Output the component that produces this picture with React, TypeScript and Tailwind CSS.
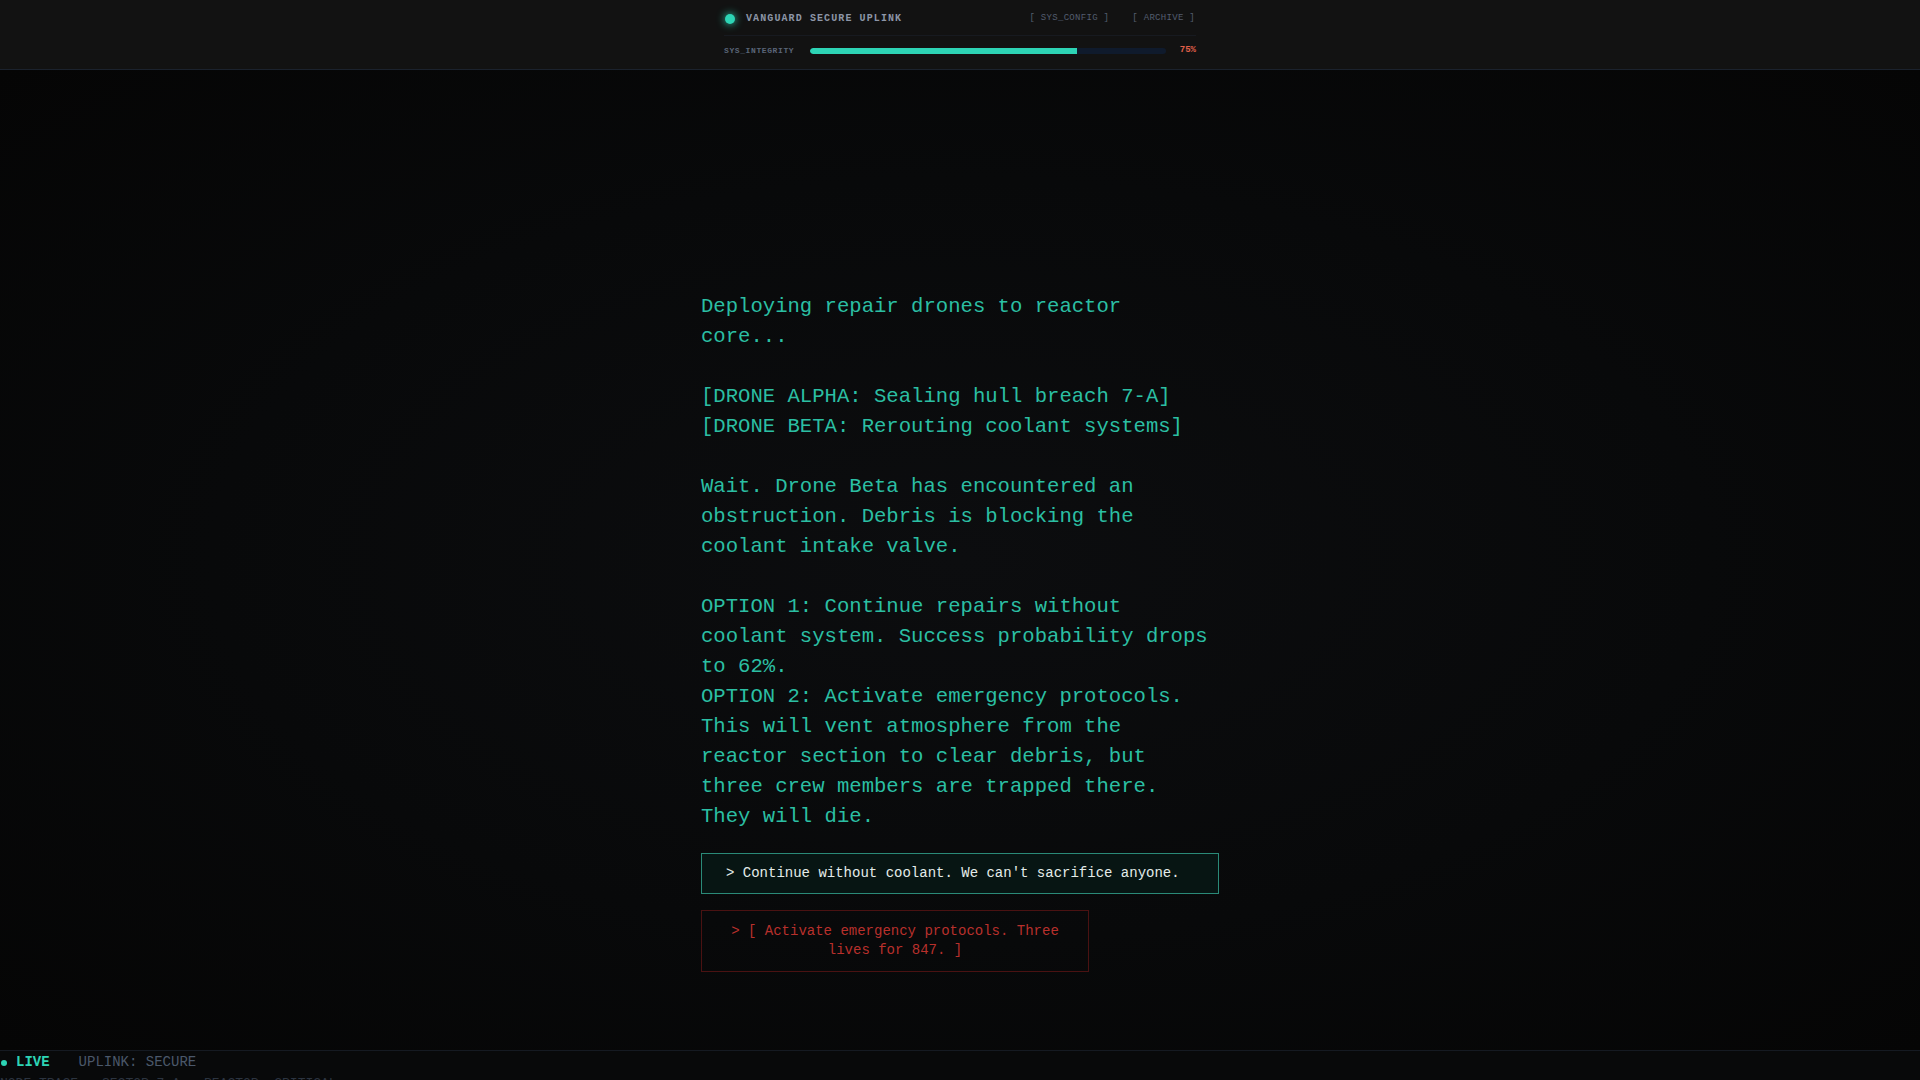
import React from "react";

const mono = "font-['Liberation_Mono','DejaVu_Sans_Mono',monospace]";

const story = `Deploying repair drones to reactor core...

[DRONE ALPHA: Sealing hull breach 7-A]
[DRONE BETA: Rerouting coolant systems]

Wait. Drone Beta has encountered an obstruction. Debris is blocking the coolant intake valve.

OPTION 1: Continue repairs without coolant system. Success probability drops to 62%.
OPTION 2: Activate emergency protocols. This will vent atmosphere from the reactor section to clear debris, but three crew members are trapped there. They will die.`;

export default function App() {
  const integrity = 75;

  return (
    <div className={`h-screen w-full flex flex-col overflow-hidden bg-[#08090a] ${mono}`}>
      {/* top bar */}
      <header className="h-[70px] shrink-0 bg-[#121212] border-b border-[#1b222d]">
        <div className="w-[472px] mx-auto flex flex-col">
          <div className="h-9 pt-[2px] flex items-center justify-between border-b border-[#171a20]">
            <div className="flex items-center gap-[11px] pl-[1px]">
              <span className="w-[10px] h-[10px] rounded-full bg-[#2dd4b5] shadow-[0_0_8px_#2dd4b5]" />
              <span className="text-[10px] font-bold tracking-[1.1px] text-[#8d96a7]">
                VANGUARD SECURE UPLINK
              </span>
            </div>
            <nav className="flex items-center gap-[23px] pr-[1px] text-[9px] tracking-[0.3px] text-[#525d6e]">
              <span>[ SYS_CONFIG ]</span>
              <span>[ ARCHIVE ]</span>
            </nav>
          </div>
          <div className="h-[30px] flex items-center">
            <span className="text-[8px] font-bold tracking-[0.6px] text-[#5a6578]">SYS_INTEGRITY</span>
            <div className="flex-1 ml-4 mr-[14px] h-[6px] rounded-full bg-[#0f1a2c] overflow-hidden">
              <div className="h-full rounded-l-full bg-[#2dd4b5]" style={{ width: `${integrity}%` }} />
            </div>
            <span className="text-[9px] font-bold text-[#e0604a]">{integrity}%</span>
          </div>
        </div>
      </header>

      {/* main terminal */}
      <main className="flex-1 min-h-0 bg-[radial-gradient(ellipse_at_center,#0c0d0f_0%,#08090a_55%,#050505_100%)]">
        <div className="w-[518px] mx-auto pt-[222px] flex flex-col">
          <p className="text-[20.6px] leading-[30px] text-[#2bbfa3] whitespace-pre-wrap">{story}</p>

          <div className="mt-[21px] flex flex-col gap-4 items-start">
            <button className="w-full text-left px-6 py-[10px] text-[14px] leading-[19px] text-[#e4ecea] bg-[#071513] border border-[#2a8a78]">
              &gt; Continue without coolant. We can't sacrifice anyone.
            </button>
            <button className="w-[388px] text-center px-6 py-[11px] text-[14px] leading-[19px] text-[#b8302c] bg-transparent border border-[#4a1212]">
              &gt; [ Activate emergency protocols. Three lives for 847. ]
            </button>
          </div>
        </div>
      </main>

      {/* status strip */}
      <footer className="h-[30px] shrink-0 border-t border-[#151a22] bg-[#08090a] overflow-hidden">
        <div className="h-[23px] flex items-center text-[14px]">
          <span className="flex items-center gap-[9px] pl-[1px] font-bold text-[#2dd4b5]">
            <span className="w-[6px] h-[6px] rounded-full bg-[#2dd4b5]" />
            LIVE
          </span>
          <span className="ml-[29px] text-[#4b586a]">UPLINK: SECURE</span>
        </div>
        <div className="h-[20px] flex items-center gap-6 text-[13px] text-[#2c3440]">
          <span>NODE_TRACE</span>
          <span>SECTOR 7-A</span>
          <span>REACTOR: CRITICAL</span>
        </div>
      </footer>
    </div>
  );
}
